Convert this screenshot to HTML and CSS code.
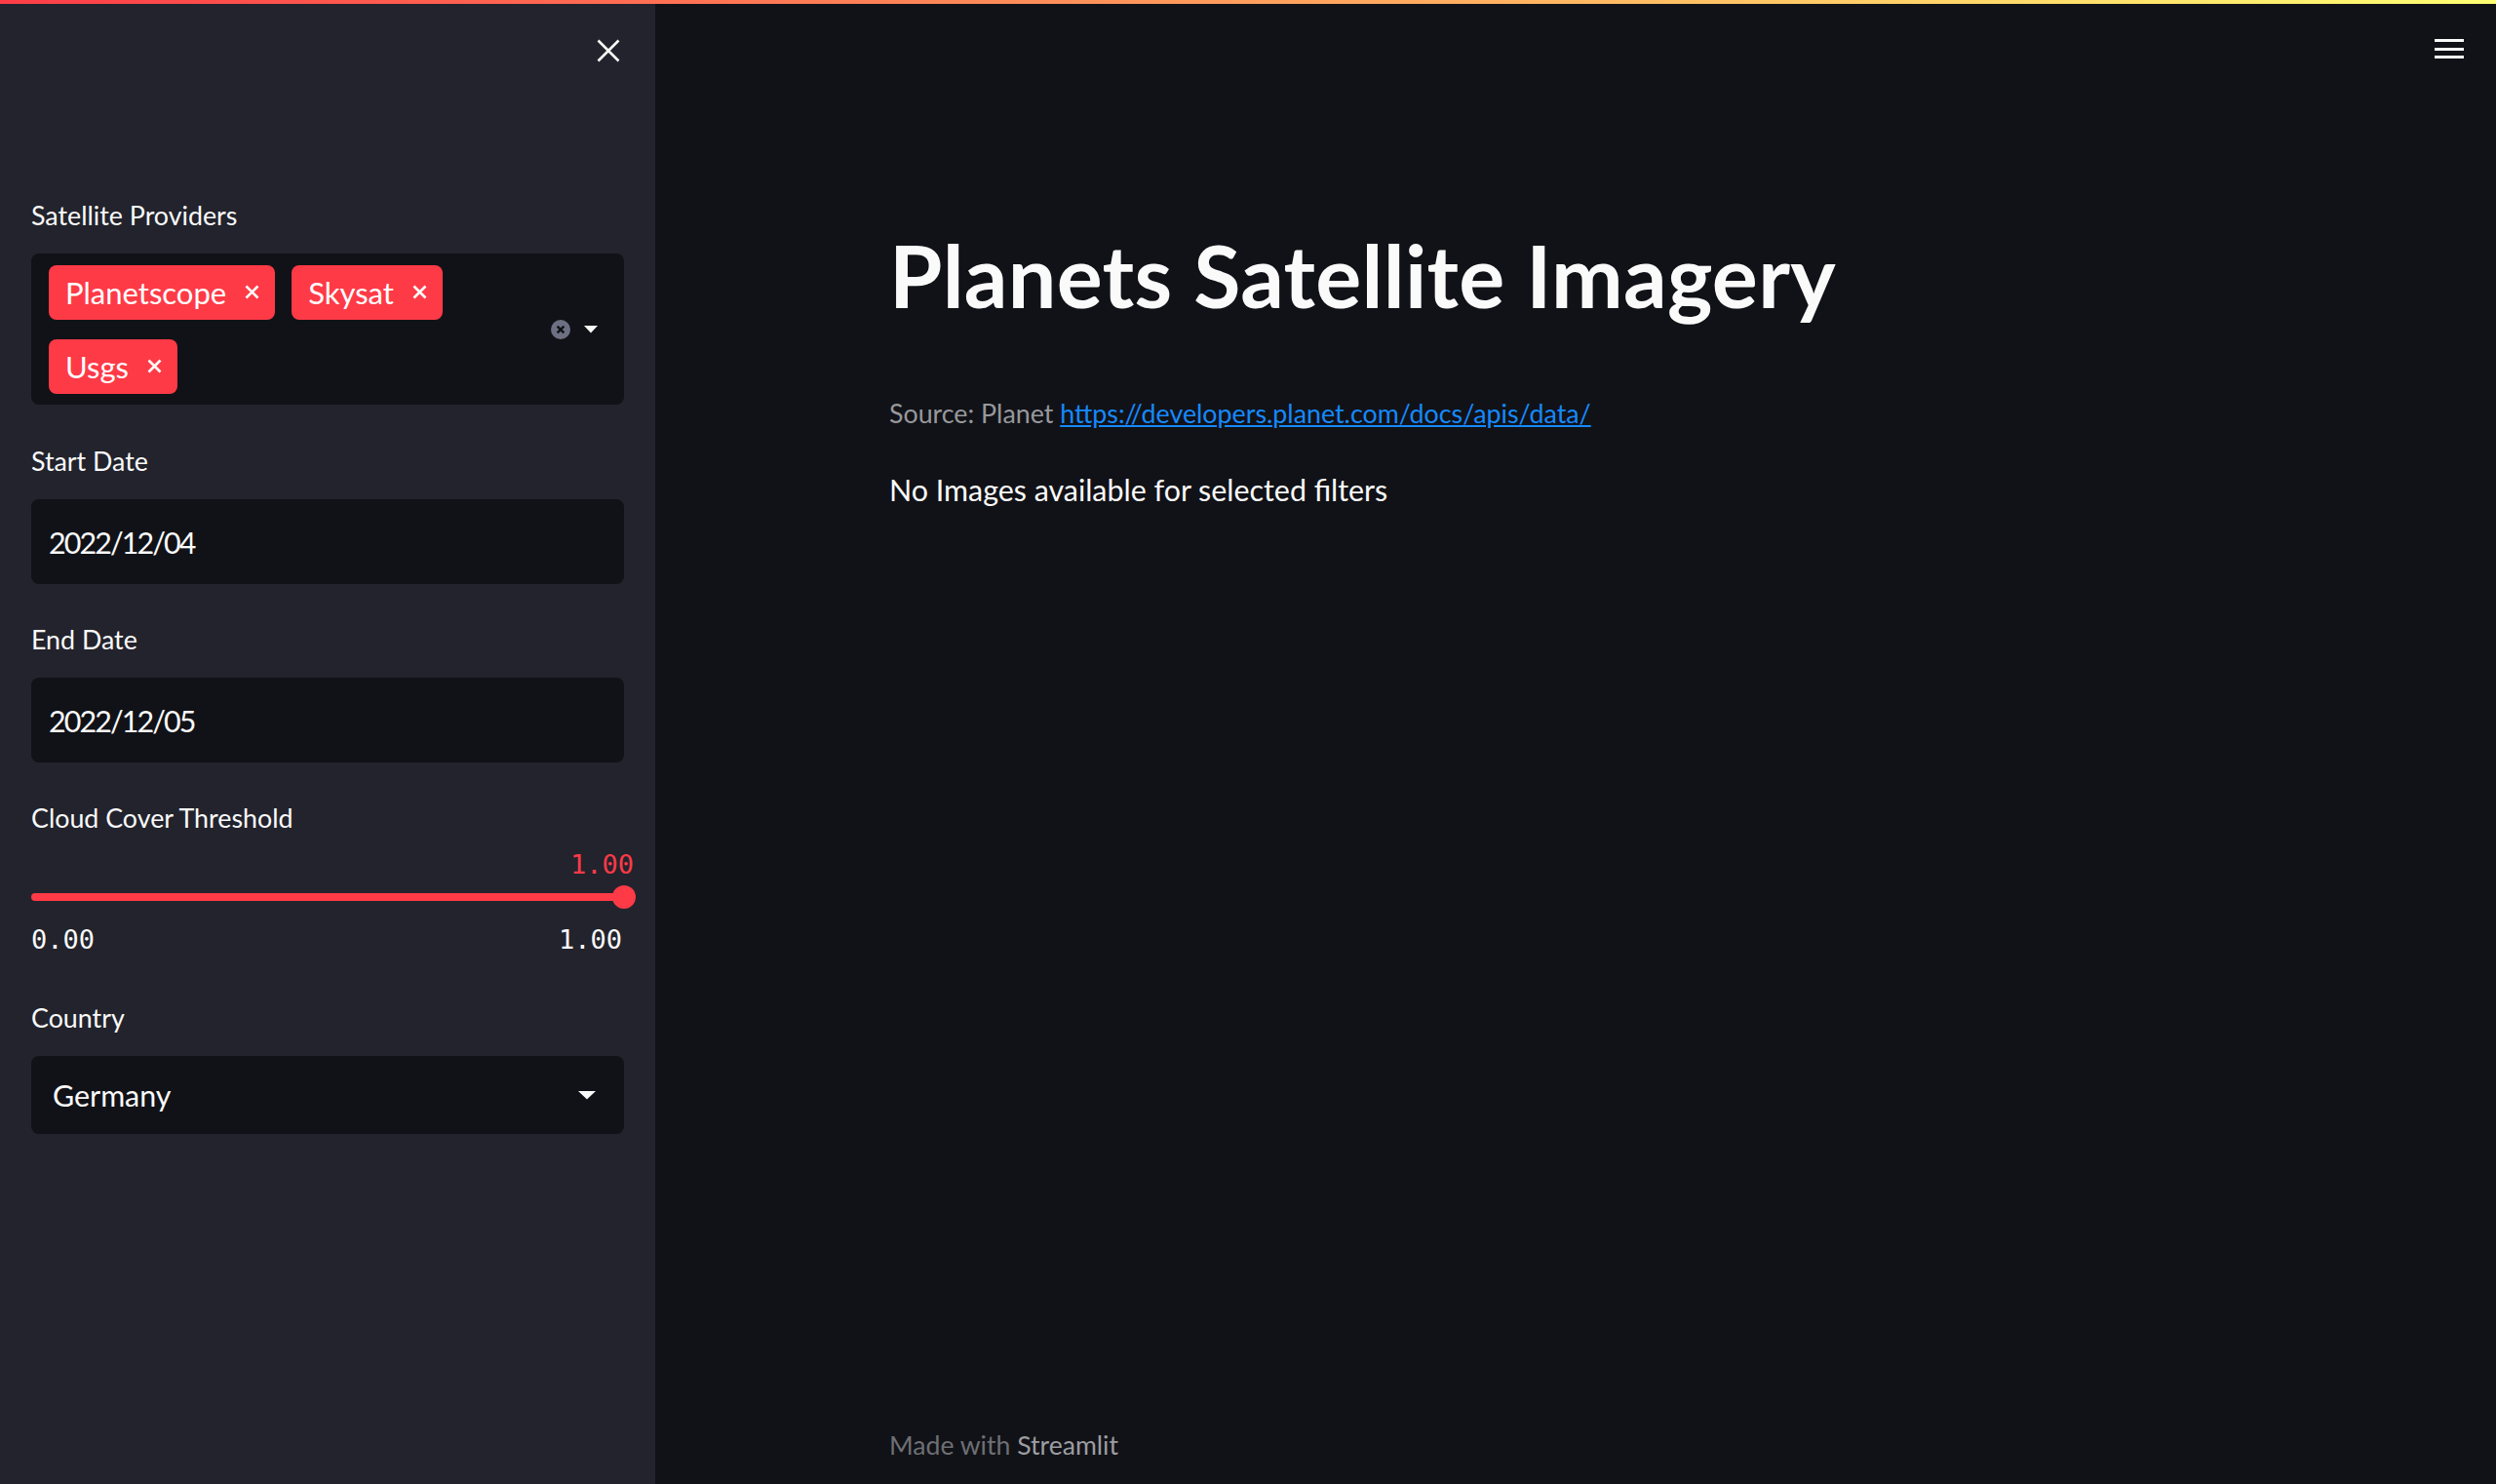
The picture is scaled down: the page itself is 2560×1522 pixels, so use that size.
FILE: index.html
```html
<!DOCTYPE html>
<html lang="en">
<head>
<meta charset="utf-8">
<title>Planets Satellite Imagery</title>
<link rel="stylesheet" href="styles.css">
</head>
<body>
<div class="topbar"></div>
<div class="app">
  <aside class="sidebar">
    <div class="sidebar-top">
      <button class="close-btn" aria-label="Close sidebar">
        <svg width="24" height="24" viewBox="0 0 24 24"><path d="M1.5 1.5 L22.5 22.5 M22.5 1.5 L1.5 22.5" stroke="#fafafa" stroke-width="2.6" fill="none"/></svg>
      </button>
    </div>

    <div class="field first">
      <div class="label">Satellite Providers</div>
      <div class="multiselect">
        <div class="tags">
          <span class="tag"><span>Planetscope</span><svg class="tag-x" width="15" height="15" viewBox="0 0 15 15"><path d="M1.5 1.5 L13.5 13.5 M13.5 1.5 L1.5 13.5" stroke="#fff" stroke-width="2.6"/></svg></span>
          <span class="tag"><span>Skysat</span><svg class="tag-x" width="15" height="15" viewBox="0 0 15 15"><path d="M1.5 1.5 L13.5 13.5 M13.5 1.5 L1.5 13.5" stroke="#fff" stroke-width="2.6"/></svg></span>
          <span class="tag"><span>Usgs</span><svg class="tag-x" width="15" height="15" viewBox="0 0 15 15"><path d="M1.5 1.5 L13.5 13.5 M13.5 1.5 L1.5 13.5" stroke="#fff" stroke-width="2.6"/></svg></span>
        </div>
        <div class="indicators">
          <svg class="clear" width="20" height="20" viewBox="0 0 20 20"><circle cx="10" cy="10" r="10" fill="#6d7082"/><path d="M6.6 6.6 L13.4 13.4 M13.4 6.6 L6.6 13.4" stroke="#111217" stroke-width="2.4"/></svg>
          <svg class="caret" width="14" height="8" viewBox="0 0 14 8"><path d="M0 0 H14 L7 7.5 Z" fill="#fafafa"/></svg>
        </div>
      </div>
    </div>

    <div class="field">
      <div class="label">Start Date</div>
      <div class="input">2022/12/04</div>
    </div>

    <div class="field">
      <div class="label">End Date</div>
      <div class="input">2022/12/05</div>
    </div>

    <div class="field">
      <div class="label">Cloud Cover Threshold</div>
      <div class="slider">
        <div class="slider-value">1.00</div>
        <div class="track-wrap">
          <div class="track"><span class="thumb"></span></div>
        </div>
        <div class="ticks"><span>0.00</span><span>1.00</span></div>
      </div>
    </div>

    <div class="field">
      <div class="label">Country</div>
      <div class="select">
        <span>Germany</span>
        <svg class="caret" width="18" height="9" viewBox="0 0 18 9"><path d="M0 0 H18 L9 8.5 Z" fill="#fafafa"/></svg>
      </div>
    </div>
  </aside>

  <main class="main">
    <div class="main-header">
      <button class="menu-btn" aria-label="Main menu"><span></span><span></span><span></span></button>
    </div>
    <div class="block">
      <h1 class="title">Planets Satellite Imagery</h1>
      <p class="caption">Source: Planet <a href="#">https://developers.planet.com/docs/apis/data/</a></p>
      <p class="text">No Images available for selected filters</p>
    </div>
    <footer class="footer">Made with <span class="brand">Streamlit</span></footer>
  </main>
</div>
</body>
</html>
```

FILE: styles.css
```css
html, body {
  margin: 0;
  padding: 0;
  width: 2560px;
  height: 1522px;
  overflow: hidden;
  background: #111217;
  color: #fafafa;
  font-family: Lato, "Noto Sans", sans-serif;
}

.topbar {
  height: 4px;
  background: linear-gradient(90deg, #ff3d48, #ffff72);
}

.app {
  display: flex;
  height: 1518px;
}

/* Sidebar */
.sidebar {
  width: 672px;
  flex: none;
  box-sizing: border-box;
  background: #22232c;
  padding: 0 32px;
  display: flex;
  flex-direction: column;
}

.sidebar-top {
  display: flex;
  justify-content: flex-end;
  padding: 36px 4px 0 0;
  height: 60px;
  box-sizing: border-box;
  margin-bottom: 135px;
}

.close-btn {
  width: 24px;
  height: 24px;
  padding: 0;
  border: 0;
  background: none;
  display: flex;
}

.field {
  display: flex;
  flex-direction: column;
  margin-top: 35px;
}

.field.first {
  margin-top: 0;
}

.field:nth-child(3) {
  margin-top: 36px;
}

.label {
  font-size: 26.8px;
  line-height: 40px;
  padding-top: 2px;
  margin-bottom: 19px;
  color: #fafafa;
}

.multiselect {
  height: 155px;
  box-sizing: border-box;
  background: #111217;
  border-radius: 8px;
  display: flex;
  align-items: center;
  padding: 12px 27px 12px 18px;
}

.tags {
  flex: 1;
  display: flex;
  flex-wrap: wrap;
  gap: 20px 17px;
  align-content: center;
}

.tag {
  display: inline-flex;
  align-items: center;
  height: 56px;
  box-sizing: border-box;
  padding: 0 16px 0 17px;
  gap: 19px;
  background: #fe3a47;
  border-radius: 8px;
  font-size: 31px;
  color: #ffffff;
}

.tag-x {
  flex: none;
}

.indicators {
  display: flex;
  align-items: center;
  gap: 14px;
}

.input {
  height: 87px;
  box-sizing: border-box;
  background: #111217;
  border-radius: 8px;
  display: flex;
  align-items: center;
  padding-left: 18px;
  font-size: 30.4px;
  letter-spacing: -1.9px;
}

/* Slider */
.slider {
  margin-top: -7px;
  margin-bottom: 7px;
}

.slider-value {
  display: flex;
  justify-content: flex-end;
  margin-right: -10px;
  font-family: "DejaVu Sans Mono", "Liberation Mono", monospace;
  font-size: 27px;
  line-height: 32px;
  color: #fe3a47;
}

.track-wrap {
  height: 34px;
  display: flex;
  align-items: center;
}

.track {
  flex: 1;
  height: 8px;
  border-radius: 4px;
  background: #fe3a47;
  position: relative;
}

.thumb {
  position: absolute;
  right: -12px;
  top: -8px;
  width: 24px;
  height: 24px;
  border-radius: 50%;
  background: #fe3a47;
}

.ticks {
  display: flex;
  justify-content: space-between;
  margin-top: 11px;
  padding-right: 2px;
  font-family: "DejaVu Sans Mono", "Liberation Mono", monospace;
  font-size: 27px;
  line-height: 32px;
  color: #fafafa;
}

.select {
  height: 80px;
  box-sizing: border-box;
  background: #111217;
  border-radius: 8px;
  display: flex;
  align-items: center;
  justify-content: space-between;
  padding: 0 29px 0 22px;
  font-size: 30.4px;
}

/* Main */
.main {
  flex: 1;
  min-width: 0;
  display: flex;
  flex-direction: column;
}

.main-header {
  display: flex;
  justify-content: flex-end;
  padding: 36px 33px 0 0;
  height: 60px;
  box-sizing: border-box;
}

.menu-btn {
  width: 30px;
  height: 20px;
  padding: 0;
  border: 0;
  background: none;
  display: flex;
  flex-direction: column;
  justify-content: space-between;
}

.menu-btn span {
  display: block;
  height: 3px;
  background: #fafafa;
}

.block {
  width: 1408px;
  margin: 0 auto;
  padding-top: 166px;
}

.title {
  margin: 0;
  font-size: 88px;
  font-weight: 700;
  line-height: 1.2;
  letter-spacing: 0.3px;
  color: #fafafa;
}

.caption {
  margin: 66px 0 0;
  font-size: 26.8px;
  line-height: 44.8px;
  color: #97989c;
}

.caption a {
  color: #1689fc;
  text-decoration: underline;
}

.text {
  margin: 31px 0 0;
  font-size: 30.4px;
  line-height: 51.2px;
  color: #fafafa;
}

.footer {
  margin: auto auto 0;
  width: 1408px;
  padding-bottom: 17px;
  font-size: 26.6px;
  line-height: 44.8px;
  color: #6e6f74;
}

.footer .brand {
  color: #9c9da1;
}
```
